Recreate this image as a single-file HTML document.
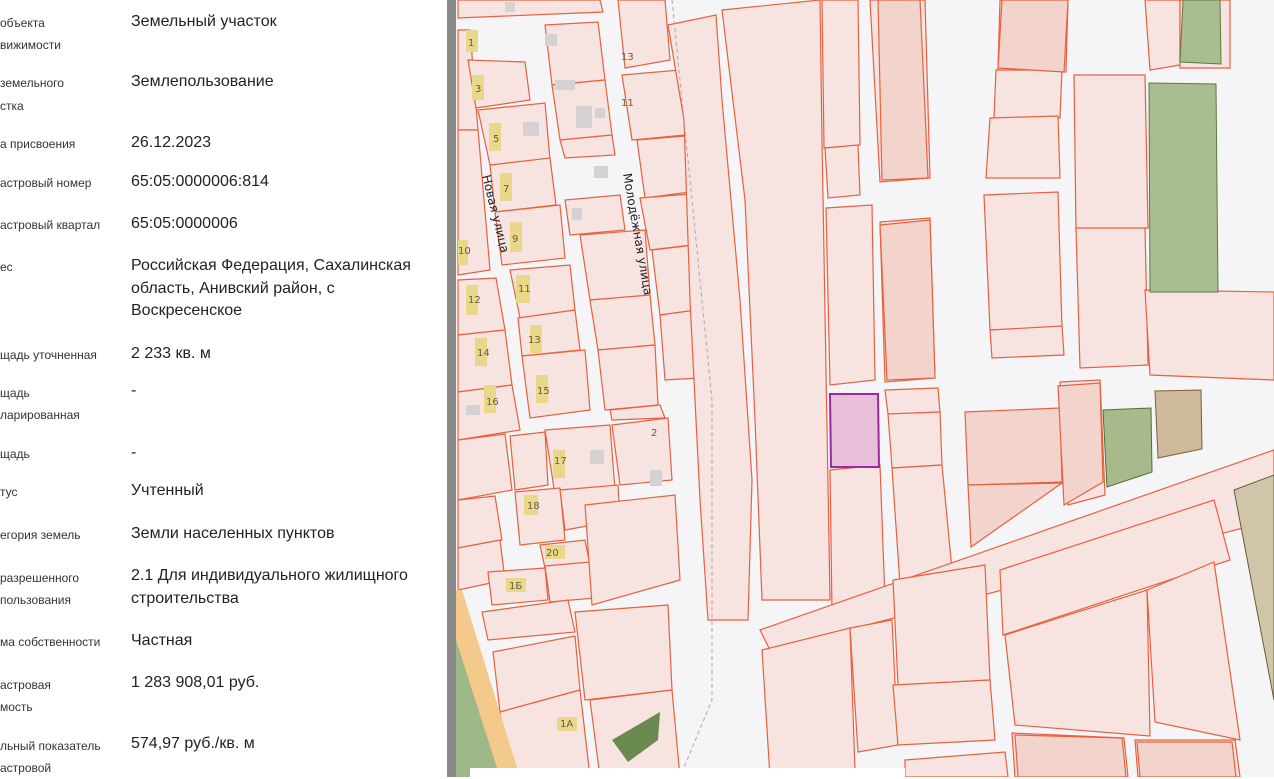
<!DOCTYPE html>
<html><head><meta charset="utf-8"><style>
html,body{margin:0;padding:0;width:1274px;height:777px;overflow:hidden;background:#fff;font-family:"Liberation Sans","DejaVu Sans",sans-serif}
#map{position:absolute;left:0;top:0}
#panel{position:absolute;left:0;top:0;width:447px;height:777px;background:#fff}
#pin{position:absolute;left:0;top:2px;width:447px;height:775px}
.l{position:absolute;left:0;font-size:12px;color:#333;line-height:22px;white-space:nowrap}
.v{position:absolute;left:131px;font-size:16px;color:#222;line-height:22.5px;white-space:nowrap}
#bar{position:absolute;left:447px;top:0;width:9px;height:777px;background:#8a8a8a}
</style></head><body>
<svg id="map" width="1274" height="777" viewBox="0 0 1274 777" xmlns="http://www.w3.org/2000/svg">
<rect x="456" y="0" width="818" height="777" fill="#f5f4f7"/>
<g fill="#f7e4e0" stroke="#e8603f" stroke-width="1.2">
<polygon points="458,0 600,0 603,12 458,18"/>
<polygon points="458,30 470,30 478,130 458,130"/>
<polygon points="468,60 525,62 530,100 476,108"/>
<polygon points="478,110 545,103 550,160 490,165"/>
<polygon points="490,165 550,158 556,205 495,212"/>
<polygon points="495,212 560,205 565,258 502,265"/>
<polygon points="458,130 478,130 490,270 458,275"/>
<polygon points="458,280 496,278 505,330 458,335"/>
<polygon points="458,335 505,330 512,385 458,392"/>
<polygon points="458,392 512,385 520,430 458,440"/>
<polygon points="458,440 505,434 512,490 458,500"/>
<polygon points="458,500 495,496 502,540 458,548"/>
<polygon points="458,548 500,540 505,580 458,590"/>
<polygon points="510,270 570,265 575,310 520,318"/>
<polygon points="518,318 575,310 580,350 522,356"/>
<polygon points="522,356 585,350 590,410 530,418"/>
<polygon points="510,436 545,432 548,485 515,490"/>
<polygon points="545,430 610,425 615,490 555,495"/>
<polygon points="515,492 560,488 565,540 520,545"/>
<polygon points="560,490 618,485 620,520 565,530"/>
<polygon points="540,545 585,540 590,565 545,568"/>
<polygon points="488,572 545,568 548,600 492,605"/>
<polygon points="545,566 590,562 595,598 550,602"/>
<polygon points="585,505 675,495 680,580 592,605"/>
<polygon points="482,612 568,600 575,632 488,640"/>
<polygon points="493,652 575,636 580,690 500,712"/>
<polygon points="575,612 668,605 672,690 585,700"/>
<polygon points="500,712 580,690 590,777 510,777"/>
<polygon points="590,700 672,690 680,777 600,777"/>
<polygon points="545,25 598,22 605,80 552,85"/>
<polygon points="552,85 605,80 612,135 560,140"/>
<polygon points="560,140 612,135 615,155 565,158"/>
<polygon points="565,200 620,195 625,230 570,235"/>
<polygon points="580,235 645,230 650,295 590,300"/>
<polygon points="590,300 650,295 655,345 598,350"/>
<polygon points="598,350 655,345 658,405 605,410"/>
<polygon points="610,410 660,405 665,418 612,420"/>
<polygon points="612,425 668,418 672,480 620,485"/>
<polygon points="618,0 665,0 670,60 625,68"/>
<polygon points="622,75 680,70 685,135 632,140"/>
<polygon points="637,140 685,136 690,192 645,198"/>
<polygon points="640,198 690,194 692,245 650,250"/>
<polygon points="652,250 694,245 696,310 660,315"/>
<polygon points="660,315 696,310 698,378 665,380"/>
<polygon points="668,25 716,15 722,100 740,300 752,480 748,620 708,620 700,500 690,300 684,120"/>
<polygon points="722,10 820,0 822,140 830,600 762,600 755,420 745,200"/>
<polygon points="822,0 858,0 860,145 824,148"/>
<polygon points="825,148 858,145 860,195 828,198"/>
<polygon points="826,208 872,205 875,380 830,385"/>
<polygon points="830,470 880,465 885,600 832,612"/>
<polygon points="870,0 925,0 930,178 880,182"/>
<polygon points="880,222 930,218 935,378 885,382"/>
<polygon points="885,390 938,388 940,412 888,414"/>
<polygon points="888,414 940,412 942,465 892,468"/>
<polygon points="892,468 942,465 952,570 900,585"/>
<polygon points="1000,0 1068,0 1066,72 998,70"/>
<polygon points="996,70 1062,70 1060,118 994,118"/>
<polygon points="990,118 1058,116 1060,178 986,178"/>
<polygon points="984,195 1058,192 1062,328 990,330"/>
<polygon points="990,330 1062,326 1064,355 992,358"/>
<polygon points="1074,75 1145,75 1148,228 1076,232"/>
<polygon points="1076,228 1145,228 1148,365 1080,368"/>
<polygon points="1145,0 1180,0 1180,65 1150,70"/>
<polygon points="1180,0 1230,0 1230,68 1180,68"/>
<polygon points="1145,290 1274,292 1274,380 1150,375"/>
<polygon points="1060,382 1100,380 1105,495 1068,505"/>
<polygon points="760,630 1274,450 1274,520 770,650"/>
<polygon points="762,650 850,628 855,770 770,777"/>
<polygon points="850,628 892,620 898,745 858,752"/>
<polygon points="893,580 985,565 990,680 898,685"/>
<polygon points="893,685 990,680 995,740 898,745"/>
<polygon points="1000,570 1214,500 1230,560 1003,635"/>
<polygon points="1005,635 1147,590 1150,736 1015,725"/>
<polygon points="1147,590 1214,562 1240,740 1155,722"/>
<polygon points="1012,733 1124,738 1128,777 1015,777"/>
<polygon points="1135,740 1235,740 1240,777 1138,777"/>
<polygon points="905,760 1005,752 1008,777 905,777"/>
</g>
<g fill="#f3d4cc" stroke="#e8603f" stroke-width="1.2">
<polygon points="878,0 920,0 928,178 882,180"/>
<polygon points="880,225 930,220 935,378 887,380"/>
<polygon points="1002,0 1068,0 1064,72 998,68"/>
<polygon points="965,412 1060,408 1062,482 968,485"/>
<polygon points="968,485 1062,483 971,547"/>
<polygon points="1058,386 1100,383 1103,482 1064,505"/>
<polygon points="1015,735 1122,738 1126,777 1018,777"/>
<polygon points="1137,742 1232,742 1236,777 1140,777"/>
</g>
<polygon points="1183,0 1220,0 1221,64 1180,62" fill="#a8be90" stroke="#5a7a40"/>
<polygon points="1149,83 1216,84 1218,292 1150,292" fill="#a8be90" stroke="#5a7a40"/>
<polygon points="1103,410 1151,408 1152,472 1107,487" fill="#a8ba8c" stroke="#4f7034"/>
<polygon points="1155,391 1201,390 1202,449 1158,458" fill="#cfb99c" stroke="#7a6030"/>
<polygon points="1234,490 1274,475 1274,700" fill="#cfc6aa" stroke="#6b5a30"/>
<polygon points="830,394 878,394 879,467 831,467" fill="#e7bfd8" stroke="#9b26a8" stroke-width="2"/>
<polygon points="456,590 462,590 520,777 456,777" fill="#f4c98c"/>
<polygon points="456,640 500,777 456,777" fill="#9fb887"/>
<polygon points="612,740 660,712 658,740 628,762" fill="#6b8a4f"/>
<g fill="#ead88a">
<rect x="466" y="30" width="12" height="22"/><rect x="472" y="75" width="12" height="25"/>
<rect x="489" y="123" width="12" height="28"/><rect x="500" y="173" width="12" height="28"/>
<rect x="510" y="222" width="12" height="30"/><rect x="466" y="285" width="12" height="30"/>
<rect x="475" y="338" width="12" height="28"/><rect x="484" y="385" width="12" height="28"/>
<rect x="516" y="275" width="14" height="28"/><rect x="530" y="325" width="12" height="28"/>
<rect x="536" y="375" width="12" height="28"/><rect x="553" y="450" width="12" height="28"/>
<rect x="524" y="495" width="14" height="20"/><rect x="545" y="545" width="20" height="14"/>
<rect x="506" y="578" width="20" height="14"/><rect x="557" y="717" width="20" height="14"/>
<rect x="458" y="240" width="10" height="25"/>
</g>
<g fill="#d6d2d4">
<rect x="545" y="34" width="12" height="12"/><rect x="523" y="122" width="16" height="14"/>
<rect x="576" y="106" width="16" height="22"/><rect x="595" y="108" width="10" height="10"/>
<rect x="594" y="166" width="14" height="12"/><rect x="572" y="208" width="10" height="12"/>
<rect x="555" y="80" width="20" height="10"/><rect x="590" y="450" width="14" height="14"/>
<rect x="650" y="470" width="12" height="16"/><rect x="505" y="2" width="10" height="10"/>
<rect x="466" y="405" width="14" height="10"/>
</g>
<g font-family="DejaVu Sans,sans-serif" font-size="10" fill="#6a5a40">
<text x="468" y="46">1</text><text x="475" y="92">3</text><text x="493" y="142">5</text>
<text x="503" y="192">7</text><text x="512" y="242">9</text><text x="458" y="254">10</text>
<text x="468" y="303">12</text><text x="477" y="356">14</text><text x="486" y="405">16</text>
<text x="518" y="292">11</text><text x="528" y="343">13</text><text x="537" y="394">15</text>
<text x="554" y="464">17</text><text x="527" y="509">18</text><text x="546" y="556">20</text>
<text x="509" y="589">1Б</text><text x="560" y="727">1А</text>
<text x="621" y="60">13</text><text x="621" y="106">11</text><text x="651" y="436">2</text>
</g>
<g font-family="DejaVu Sans,sans-serif" font-size="12" fill="#222">
<text transform="translate(482,176) rotate(76)">Новая улица</text>
<text transform="translate(623,174) rotate(80)">Молодёжная улица</text>
</g>
<path d="M672,0 L680,80 L712,400 L712,700 L680,777" stroke="#aaa" stroke-dasharray="4,3" fill="none"/>
<rect x="470" y="768" width="435" height="9" fill="#fff"/>
</svg>
<div id="bar"></div>
<div id="panel"><div id="pin">
<div class="l" style="top:10px">объекта</div><div class="l" style="top:32px">вижимости</div><div class="v" style="top:9px">Земельный участок</div>
<div class="l" style="top:70px">земельного</div><div class="l" style="top:93px">стка</div><div class="v" style="top:69px">Землепользование</div>
<div class="l" style="top:131px">а присвоения</div><div class="v" style="top:130px">26.12.2023</div>
<div class="l" style="top:170px">астровый номер</div><div class="v" style="top:169px">65:05:0000006:814</div>
<div class="l" style="top:212px">астровый квартал</div><div class="v" style="top:211px">65:05:0000006</div>
<div class="l" style="top:254px">ес</div><div class="v" style="top:253px">Российская Федерация, Сахалинская<br>область, Анивский район, с<br>Воскресенское</div>
<div class="l" style="top:342px">щадь уточненная</div><div class="v" style="top:341px">2 233 кв. м</div>
<div class="l" style="top:380px">щадь</div><div class="l" style="top:402px">ларированная</div><div class="v" style="top:378px">-</div>
<div class="l" style="top:441px">щадь</div><div class="v" style="top:440px">-</div>
<div class="l" style="top:479px">тус</div><div class="v" style="top:478px">Учтенный</div>
<div class="l" style="top:522px">егория земель</div><div class="v" style="top:521px">Земли населенных пунктов</div>
<div class="l" style="top:565px">разрешенного</div><div class="l" style="top:587px">пользования</div><div class="v" style="top:563px">2.1 Для индивидуального жилищного<br>строительства</div>
<div class="l" style="top:629px">ма собственности</div><div class="v" style="top:628px">Частная</div>
<div class="l" style="top:672px">астровая</div><div class="l" style="top:694px">мость</div><div class="v" style="top:670px">1 283 908,01 руб.</div>
<div class="l" style="top:733px">льный показатель</div><div class="l" style="top:755px">астровой</div><div class="v" style="top:731px">574,97 руб./кв. м</div>
</div></div>
</body></html>
